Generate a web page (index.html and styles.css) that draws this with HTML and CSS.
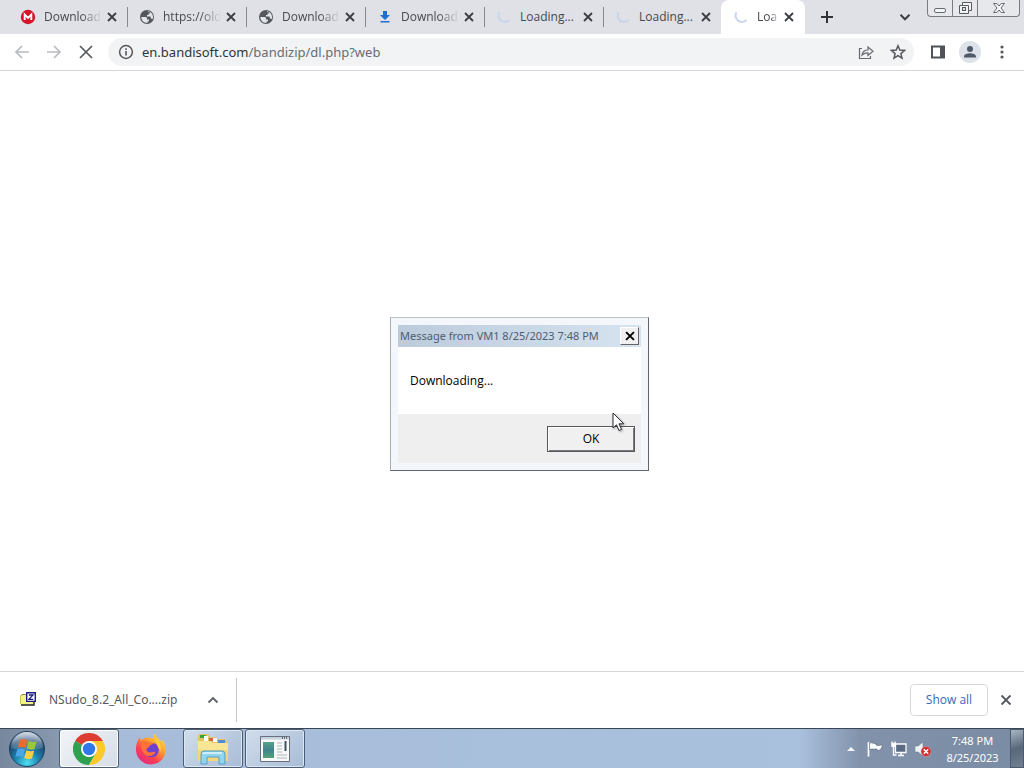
FILE: index.html
```html
<!DOCTYPE html>
<html lang="en">
<head>
<meta charset="utf-8">
<title>Loading...</title>
<link rel="stylesheet" href="styles.css">
</head>
<body>
<svg class="defs" aria-hidden="true">
  <symbol id="close" viewBox="0 0 16 16"><path d="M4 4l8 8M12 4l-8 8" stroke="currentColor" stroke-width="1.8" fill="none"/></symbol>
  <symbol id="globe" viewBox="0 0 16 16"><circle cx="8" cy="8" r="7" fill="#54585d"/><path d="M2.300 8h4.200c1 0 1.500.7 1.500 1.500v1h2v1.300c0 .5-.4.700-.9.700H8.500v1.400C5 14 2.300 11.500 2.300 8z" fill="#e2e5e9"/><path d="M9 2.300c3 .4 5 2.800 5 5.700 0 .8-.2 1.500-.5 2.200-.5-.5-1-.7-1.700-.7V8.300c0-.5-.3-.8-.8-.8H8V6h1.500V4.500H11V3.400c-.7-.3-1.300-.4-2-.4z" fill="#e2e5e9"/></symbol>
  <symbol id="spin" viewBox="0 0 16 16"><path d="M3.500 3.200a6.300 6.300 0 0 0 10 7.600" fill="none" stroke="currentColor" stroke-width="2"/></symbol>
</svg>

<header>
  <div class="tabstrip">
    <div class="tab">
      <svg class="icon" viewBox="0 0 16 16"><circle cx="8" cy="8" r="7.200" fill="#d5152a"/><path d="M4.700 11V5.500L8 8.800l3.300-3.300V11" fill="none" stroke="#fff" stroke-width="1.900"/></svg>
      <span class="title fade">Download</span>
      <button class="x" aria-label="Close tab"><svg class="icon"><use href="#close"/></svg></button>
    </div>
    <div class="tab">
      <svg class="icon"><use href="#globe"/></svg>
      <span class="title fade">https://old</span>
      <button class="x" aria-label="Close tab"><svg class="icon"><use href="#close"/></svg></button>
    </div>
    <div class="tab">
      <svg class="icon"><use href="#globe"/></svg>
      <span class="title fade">Download</span>
      <button class="x" aria-label="Close tab"><svg class="icon"><use href="#close"/></svg></button>
    </div>
    <div class="tab">
      <svg class="icon" viewBox="0 0 16 16"><path d="M6 2h4v4h3L8 11 3 6h3zM3.500 12h9v1.600h-9z" fill="#1e6fd0"/></svg>
      <span class="title fade">Download</span>
      <button class="x" aria-label="Close tab"><svg class="icon"><use href="#close"/></svg></button>
    </div>
    <div class="tab">
      <svg class="icon spinner"><use href="#spin"/></svg>
      <span class="title">Loading...</span>
      <button class="x" aria-label="Close tab"><svg class="icon"><use href="#close"/></svg></button>
    </div>
    <div class="tab last">
      <svg class="icon spinner"><use href="#spin"/></svg>
      <span class="title">Loading...</span>
      <button class="x" aria-label="Close tab"><svg class="icon"><use href="#close"/></svg></button>
    </div>
    <div class="tab active">
      <svg class="icon spinner"><use href="#spin"/></svg>
      <span class="title fade">Loa</span>
      <button class="x" aria-label="Close tab"><svg class="icon"><use href="#close"/></svg></button>
    </div>
    <button class="newtab" aria-label="New tab"><svg class="icon" viewBox="0 0 16 16"><path d="M8 2v12M2 8h12" stroke="#2f3338" stroke-width="2"/></svg></button>
    <button class="search" aria-label="Search tabs"><svg class="icon" viewBox="0 0 16 16"><path d="M3.500 5.800L8 10.300l4.500-4.500" fill="none" stroke="#3c4045" stroke-width="2"/></svg></button>
    <div class="controls">
      <button class="ctl min" aria-label="Minimize"><svg viewBox="0 0 16 16"><rect x="2.500" y="8.500" width="11" height="4" rx="1.500" fill="#f4f5f6" stroke="#666b72"/></svg></button>
      <button class="ctl" aria-label="Restore"><svg viewBox="0 0 16 16"><path d="M5.500 2.500h9v8h-3v3h-9v-8h3z" fill="#f1f2f4" stroke="#555a61"/><path d="M5.500 5.500h6v5" fill="none" stroke="#555a61"/><rect x="5.500" y="7.500" width="3" height="3" fill="#dfe2e7" stroke="#555a61"/></svg></button>
      <button class="ctl wide" aria-label="Close"><svg viewBox="0 0 16 16"><path d="M2.500 3.500h3.300L8 6l2.200-2.500h3.300L10 8l3.500 4.500h-3.300L8 10l-2.200 2.500H2.500L6 8z" fill="#f4f5f6" stroke="#666b72"/></svg></button>
    </div>
  </div>

  <div class="toolbar">
    <button class="nav" aria-label="Back" disabled><svg viewBox="0 0 16 16"><path d="M15 8H2M8 2L2 8l6 6" fill="none" stroke="#b9bbbe" stroke-width="1.700"/></svg></button>
    <button class="nav" aria-label="Forward" disabled><svg viewBox="0 0 16 16"><path d="M1 8h13M8 2l6 6-6 6" fill="none" stroke="#b9bbbe" stroke-width="1.700"/></svg></button>
    <button class="nav" aria-label="Stop"><svg viewBox="0 0 16 16"><path d="M2 2l12 12M14 2L2 14" stroke="#55585c" stroke-width="1.700"/></svg></button>
    <div class="omnibox">
      <svg class="icon" viewBox="0 0 16 16"><circle cx="8" cy="8" r="6.400" fill="none" stroke="#55595e" stroke-width="1.500"/><path d="M8 7v4.500M8 4.300v1.600" stroke="#55595e" stroke-width="1.600"/></svg>
      <div class="url" role="textbox" aria-label="Address" tabindex="0"><span class="host">en.bandisoft.com</span>/bandizip/dl.php?web</div>
      <button class="nav" aria-label="Share"><svg viewBox="0 0 16 16"><path d="M4 4.500H1.500v10h11V12M4 11c.6-3.200 2.600-5 6-5V3l5 4.300-5 4.200V8.800c-2.600 0-4.300.6-6 2.200z" fill="none" stroke="#65696e" stroke-width="1.200"/></svg></button>
      <button class="nav" aria-label="Bookmark"><svg viewBox="0 0 16 16"><path d="M8 1.800l1.800 4.300 4.700.4-3.600 3.100 1.100 4.600L8 11.700l-4 2.500 1.100-4.600L1.500 6.500l4.700-.4z" fill="none" stroke="#55595e" stroke-width="1.500"/></svg></button>
    </div>
    <button class="nav" aria-label="Side panel"><svg viewBox="0 0 16 16"><rect x="2" y="2.500" width="12" height="11" fill="none" stroke="#505459" stroke-width="2"/><path d="M10 2h4v12h-4z" fill="#505459"/></svg></button>
    <button class="profile" aria-label="Profile"><svg class="icon" viewBox="0 0 16 16"><circle cx="8" cy="5" r="3" fill="#4f5967"/><path d="M2 13.500v-1c0-2.300 3.500-3.300 6-3.300s6 1 6 3.300v1z" fill="#4f5967"/></svg></button>
    <button class="nav" aria-label="Menu"><svg viewBox="0 0 16 16"><g fill="#55595e"><circle cx="8" cy="3" r="1.600"/><circle cx="8" cy="8" r="1.600"/><circle cx="8" cy="13" r="1.600"/></g></svg></button>
  </div>
</header>

<main></main>

<section class="shelf">
  <button class="file">
    <svg class="icon" viewBox="0 0 16 16"><path d="M.5 4.500L2 2.500h5v9H.5z" fill="#f0f07a" stroke="#8a8a30"/><path d="M.5 4h13v8.500H.5z" fill="#f2f280"/><path d="M1 13h13V10" fill="none" stroke="#222" stroke-width="1.400"/><path d="M6.700 .8h8.600v8.600H6.700z" fill="#fff" stroke="#1b1b8c" stroke-width="1.400"/><path d="M8.800 3h4.200L9 7.300h4.300" fill="none" stroke="#1b1b8c" stroke-width="1.300"/></svg>
    <span>NSudo_8.2_All_Co....zip</span>
  </button>
  <button class="more" aria-label="Download options"><svg class="icon" viewBox="0 0 16 16"><path d="M3.500 10.500L8 6l4.500 4.500" fill="none" stroke="#606468" stroke-width="1.900"/></svg></button>
  <button class="showall">Show all</button>
  <button class="shelfclose" aria-label="Close downloads bar"><svg class="icon" viewBox="0 0 16 16"><path d="M3.500 3.500l9 9M12.500 3.500l-9 9" stroke="#55595e" stroke-width="1.800"/></svg></button>
</section>

<footer class="taskbar">
  <button class="start" aria-label="Start"><svg viewBox="0 0 38 38">
    <defs>
      <radialGradient id="orb" cx=".5" cy=".9" r=".9"><stop offset="0" stop-color="#4fe0f0"/><stop offset=".4" stop-color="#1b7fae"/><stop offset=".75" stop-color="#1d4569"/><stop offset="1" stop-color="#8fa6bc"/></radialGradient>
      <linearGradient id="gloss" x2="0" y2="1"><stop offset="0" stop-color="#fff" stop-opacity=".65"/><stop offset="1" stop-color="#fff" stop-opacity=".1"/></linearGradient>
    </defs>
    <circle cx="19" cy="19" r="17.500" fill="url(#orb)" stroke="#1c4263"/>
    <path d="M3 18a16 16 0 0 1 32 0c-9 3-23 3-32 0z" fill="url(#gloss)"/>
    <path d="M12 10c3-1.500 5-1 7.500.3L17.500 18c-2.500-1.200-5-1.500-7.800-.3z" fill="#ec6a2c"/>
    <path d="M20.700 11c3 1.300 5 1.500 8 .2L26.500 19c-2.500 1.200-5 .9-7.700-.4z" fill="#9ac83c"/>
    <path d="M9.300 19.200c3-1.200 5.200-.9 7.800.3l-2.200 7.800c-2.500-1.200-4.800-1.500-7.600-.3z" fill="#4aa6e6"/>
    <path d="M18.400 20.200c2.600 1.200 5 1.600 7.800.4L24 28.400c-2.800 1.200-5 .8-7.800-.4z" fill="#fbd045"/>
  </svg></button>
  <button class="task current" aria-label="Google Chrome"><svg viewBox="0 0 32 32"><path d="M16 16L2.140 8A16 16 0 0 1 29.860 8z" fill="#dd3d30"/><path d="M16 16L2.140 8A16 16 0 0 0 16 32l7-12z" fill="#2da14e"/><path d="M16 16l7 4-7 12A16 16 0 0 0 29.860 8H16z" fill="#fbc92c"/><circle cx="16" cy="16" r="8" fill="#fff"/><circle cx="16" cy="16" r="6.200" fill="#2f78ea"/></svg></button>
  <button class="task plain" aria-label="Firefox"><svg viewBox="0 0 32 32">
    <defs><linearGradient id="fox" x1=".85" y1=".05" x2=".2" y2=".95"><stop offset="0" stop-color="#ffdf45"/><stop offset=".4" stop-color="#ff9630"/><stop offset=".7" stop-color="#fb4050"/><stop offset="1" stop-color="#e52a86"/></linearGradient></defs>
    <path d="M3 7c.5-.3.900-1.700 1.700-2.700.2 1.600.9 2.600 1.800 3.200C9 4.500 11 5 13 4.500c2 0 4 .5 5.500 1.200C17.500 3.500 18.500 1.500 20 .5c1 4 5 5 6 8 .8-.3 1-1 1-1.700 2.600 3 4 6.500 3.700 10A14.800 14.800 0 0 1 16 31.500 14.800 14.800 0 0 1 1 17c0-4 .5-7 2-10z" fill="url(#fox)"/>
    <circle cx="16.500" cy="17" r="7.300" fill="#7040cf"/>
    <path d="M6 9c4-1.500 6.500-1 9 1l4-.3c-1 2-4 2-4.500 3.300-.2 1.500-3 1.700-3 3.500 0 2.500 3.500 3.500 6 2.500 1.800-.6 2.700-.3 3 .3-1 2.700-4 4-7 3.700C8 22.500 6 17 6 9z" fill="#ff7138"/>
    <path d="M19 5c5 2.500 8 7 6.500 14-.5-3-1.500-4-2.500-4.500.5-4-3-6-4-9.500z" fill="#ffd044"/>
  </svg></button>
  <button class="task" aria-label="Windows Explorer"><svg viewBox="0 0 32 32"><path d="M1 3l1-2h9l2 3h6l2 2h7l2 3v19H1z" fill="#e3c463"/><path d="M3 2h6v3H3z" fill="#38a13c"/><path d="M12 5h6v3h-6z" fill="#df633f"/><path d="M21 7h7v3h-7z" fill="#4d8fd1"/><path d="M7 3h4v5H7zM16 5h4v4h-4z" fill="#fff"/><path d="M1 8h12l2 2h16v18H1z" fill="#f8e596"/><path d="M1 17h30v11H1z" fill="#f3d77a"/><path d="M4 31V21q0-3 3-3h18q3 0 3 3v10h-6v-7H10v7z" fill="#92d3ee" stroke="#559fc5"/><path d="M6 21q0-1 1-1h18" fill="none" stroke="#e2f7ff" stroke-width="1.500"/></svg></button>
  <button class="task" aria-label="Application"><svg viewBox="0 0 32 32"><defs><linearGradient id="pic" x2="0" y2="1"><stop offset="0" stop-color="#58a287"/><stop offset=".5" stop-color="#3d858f"/><stop offset="1" stop-color="#57a176"/></linearGradient></defs><path d="M1.500 3.500h29v25h-29z" fill="#f7f8f8" stroke="#666f7b"/><path d="M2 4h28v2.500H2z" fill="#c6d3df"/><path d="M23 5h6" stroke="#424c5c" stroke-width="1.500" stroke-dasharray="1 1"/><path d="M4 9h11v16H4z" fill="url(#pic)"/><path d="M18 10h5M18 13h5M18 16h5M18 19h5M18 22h10M18 25h10" stroke="#b1b6bd"/><path d="M25.500 8h2v10h-2z" fill="#3c5262"/></svg></button>
  <div class="tray">
    <button class="trayitem" aria-label="Show hidden icons"><svg class="icon" viewBox="0 0 16 16"><path d="M4 10l4-4 4 4z" fill="#f4f7fa"/></svg></button>
    <button class="trayitem" aria-label="Action Center"><svg class="icon" viewBox="0 0 16 16"><path d="M1.500 1v14.500" stroke="#fff" stroke-width="1.700"/><path d="M2.500 2c2.500-.8 3.500.6 6.500.6V4c2 1 4 .5 6.500-.2-.3 2-1.200 4-2.700 5.200-2 .5-3.300 0-3.300-1.200C7 8.800 5 7.500 2.500 8.500z" fill="#f9fbfc" stroke="#43536a" stroke-width=".5"/></svg></button>
    <button class="trayitem" aria-label="Network"><svg class="icon" viewBox="0 0 16 16"><path d="M4.500 3h10.500v8.500H4.500z" fill="#596b83" stroke="#fff" stroke-width="1.300"/><path d="M10 12v2M7 14.500h6M2.500 6v8h3M1 .5v2M4 .5v2" fill="none" stroke="#fff" stroke-width="1.400"/><path d="M.3 2h4.500v4H.3z" fill="#fff"/></svg></button>
    <button class="trayitem" aria-label="Volume muted"><svg class="icon" viewBox="0 0 16 16"><path d="M0 5h3l5-4v14l-5-4H0z" fill="#edf1f5" stroke="#5d6d82" stroke-width=".5"/><circle cx="11" cy="10.500" r="5" fill="#ce2b2b" stroke="#e9a6a6" stroke-width=".5"/><path d="M8.800 8.300l4.400 4.400m0-4.400l-4.400 4.400" stroke="#fff" stroke-width="1.600"/></svg></button>
    <time class="clock"><span>7:48 PM</span><span>8/25/2023</span></time>
    <button class="desktop" aria-label="Show desktop"></button>
  </div>
</footer>

<div class="dialog" role="dialog" aria-labelledby="dlg-title">
  <div class="caption"><span id="dlg-title">Message from VM1 8/25/2023 7:48 PM</span>
    <button class="dlgclose" aria-label="Close"><svg viewBox="0 0 16 16"><path d="M3.500 3.500l9 9M12.500 3.500l-9 9" stroke="#000" stroke-width="2.200"/></svg></button></div>
  <p class="message">Downloading...</p>
  <div class="actions"><button class="ok">OK</button></div>
</div>
<svg class="cursor" viewBox="0 0 13 20"><path d="M1 1v15l3.500-3.200L7 18.500l2.500-1.100L7 11.800h4.800z" fill="#fff" stroke="#2c2c34"/></svg>
</body>
</html>
```
FILE: styles.css
```css
* { box-sizing: border-box; }
body {
  margin: 0;
  height: 100vh;
  display: flex;
  flex-direction: column;
  overflow: hidden;
  background: #fff;
  font: 12px/16px "Open Sans", "Noto Sans", sans-serif;
  color: #3f4348;
}
button {
  display: flex;
  align-items: center;
  justify-content: center;
  margin: 0;
  padding: 0;
  border: 0;
  background: none;
  font: inherit;
  color: inherit;
}
svg { display: block; flex: none; width: 16px; height: 16px; }
.defs { position: absolute; width: 0; height: 0; }

.tabstrip { display: flex; height: 34px; padding-left: 9px; background: #dfe1e6; }
.tab {
  flex: 0 0 119px;
  min-width: 0;
  display: flex;
  align-items: center;
  padding: 0 8px 0 11px;
  background: linear-gradient(#868b92, #868b92) right center / 1px 20px no-repeat;
}
.title {
  flex: 1;
  min-width: 0;
  margin: 0 2px 0 8px;
  overflow: hidden;
  white-space: nowrap;
  color: #45494e;
}
.fade { -webkit-mask: linear-gradient(to right, #000 65%, transparent); mask: linear-gradient(to right, #000 65%, transparent); }
.x { flex: none; color: #3a3e43; }
.spinner { color: #c9d5ea; }
.tab.last { flex-basis: 117px; padding-right: 7px; background: none; }
.tab.active { flex-basis: 84px; padding-left: 12px; background: #fff; border-radius: 8px 8px 0 0; }
.newtab { width: 44px; }
.search { width: 32px; margin-left: auto; }
.controls {
  display: flex;
  height: 17px;
  margin: 0 4px 0 6px;
  border: 1px solid #777c84;
  border-top: 0;
  border-radius: 0 0 4px 4px;
  background: #e6e8ec;
}
.ctl { width: 25px; border-right: 1px solid #777c84; }
.ctl.wide { width: 41px; border: 0; }

.toolbar {
  display: flex;
  align-items: center;
  height: 37px;
  padding: 0 6px;
  border-bottom: 1px solid #d5d7da;
}
.nav { width: 32px; height: 28px; }
.omnibox {
  flex: 1;
  display: flex;
  align-items: center;
  height: 28px;
  margin: 0 8px 0 6px;
  padding: 0 0 0 10px;
  border-radius: 14px;
  background: #f2f3f5;
}
.url { flex: 1; margin-left: 8px; font: 13px/20px "Noto Sans", sans-serif; color: #686c71; }
.host { color: #303338; }
.profile { width: 22px; height: 22px; margin: 0 5px; border-radius: 50%; background: #dde1e8; }

main { flex: 1; }

.shelf { display: flex; align-items: center; height: 57px; padding: 0 10px 0 20px; border-top: 1px solid #d5d7da; }
.file { gap: 13px; font: 12px/16px "Noto Sans", sans-serif; color: #55595e; white-space: nowrap; }
.more { width: 48px; height: 44px; margin-left: 12px; border-right: 1px solid #c6c8cb; }
.showall {
  width: 78px;
  height: 32px;
  margin-left: auto;
  border: 1px solid #d5d8dd;
  border-radius: 4px;
  color: #3a66bd;
  font-weight: 500;
}
.shelfclose { margin-left: 10px; }

.taskbar {
  display: flex;
  height: 40px;
  border-top: 1px solid #3a4654;
  background: linear-gradient(to right, #77879d 0, #8797ae 55px, #a6bcd9 120px, #aac1de 78%, #8292ab 84%, #7a8ba4 100%);
}
.start { width: 54px; margin-right: 5px; }
.start svg { width: 38px; height: 38px; }
.task {
  width: 60px;
  margin-right: 2px;
  border: 1px solid #4c5d74;
  border-radius: 3px;
  background: linear-gradient(135deg, #d0ddec, #a8bcd6);
  box-shadow: inset 0 0 0 1px #dce7f3;
}
.task svg { width: 32px; height: 32px; }
.current { background: linear-gradient(135deg, #f1f4f7, #d5dde7); box-shadow: inset 0 0 0 1px #fff; }
.plain { border-color: transparent; background: none; box-shadow: none; }
.tray { display: flex; margin-left: auto; }
.trayitem { width: 24px; }
.clock {
  display: flex;
  flex-direction: column;
  width: 75px;
  padding-top: 3px;
  text-align: center;
  color: #fff;
  font: 11px/17px "Noto Sans", sans-serif;
}
.desktop { width: 14px; border: 1px solid #4c5a6c; background: linear-gradient(160deg, #a9b6c4, #58677a 50%, #708094); }

.dialog {
  position: absolute;
  left: 390px;
  top: 317px;
  width: 259px;
  padding: 7px;
  border: 1px solid;
  border-color: #c0c4c8 #62666c #62666c #aaaeb2;
  background: #f3f6fb;
  color: #000;
}
.caption {
  display: flex;
  align-items: center;
  justify-content: space-between;
  height: 22px;
  padding: 0 2px;
  background: linear-gradient(to right, #bccbdb, #d6e3f0);
  color: #4d5d70;
  font: 11px/16px "Noto Sans", sans-serif;
  white-space: nowrap;
}
.dlgclose { width: 19px; height: 18px; border: 1px solid; border-color: #fff #666 #666 #fff; background: #f0f0f0; }
.dlgclose svg { width: 14px; height: 14px; }
.message { margin: 0; padding: 26px 12px 25px; background: #fff; }
.actions { display: flex; justify-content: flex-end; padding: 12px 6px 11px; background: #efefef; }
.ok {
  width: 88px;
  height: 26px;
  border: 1px solid #55585c;
  background: #f0f0f0;
  box-shadow: inset 1px 1px #fff, inset -1px -1px #77797c;
}
.cursor { position: absolute; left: 612px; top: 412px; width: 13px; height: 20px; filter: drop-shadow(1px 1px 1px rgba(0, 0, 0, .35)); }
```
